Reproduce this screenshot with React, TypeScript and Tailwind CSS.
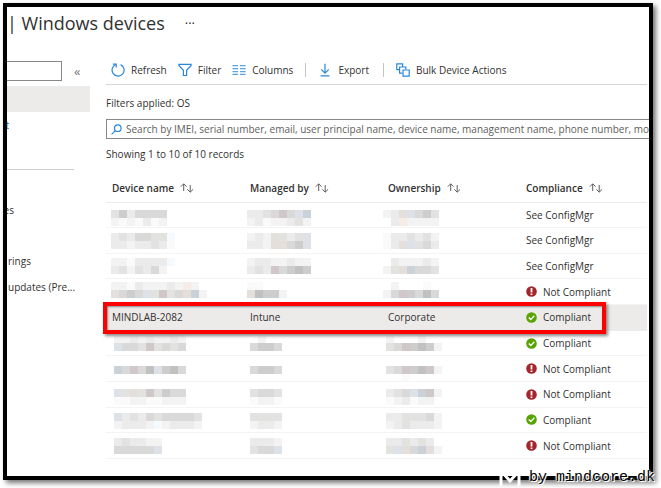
import React from 'react';

type Status = 'configmgr' | 'compliant' | 'not-compliant';

interface Mask {
  x: number;
  y: number;
  cells: string[];
}

interface Device {
  id: number;
  status: Status;
  highlighted?: boolean;
  values?: string[];
  masks?: Mask[];
}

// One letter per 8px block of a redacted value, a dot leaves the block empty
const SHADES: Record<string, string> = {
  a: '#fafafa',
  b: '#f3f3f3',
  c: '#ebebeb',
  d: '#e2e2e1',
  e: '#d8d9d8',
  f: '#cdcdcd',
  g: '#c1c1c1',
  p: '#e5dfdc',
  r: '#cfc7c8',
  o: '#f5ece6',
  u: '#dce2e7',
  v: '#cbd2d7',
  w: '#f5fafe',
};

const COLUMNS = ['Device name', 'Managed by', 'Ownership', 'Compliance'];

const DEVICES: Device[] = [
  {
    id: 1,
    status: 'configmgr',
    masks: [
      { x: 5, y: 7, cells: ['dfceeee', 'babacab'] },
      { x: 3, y: 7, cells: ['ccdereuv', 'bcabbcdb'] },
      { x: 1, y: 7, cells: ['bcpuefd', '.cobbbb'] },
    ],
  },
  {
    id: 2,
    status: 'configmgr',
    masks: [
      { x: 5, y: 5, cells: ['cdceeddw', 'ccbccdca'] },
      { x: 3, y: 5, cells: ['bcbpdcdu', 'ccbppefu'] },
      { x: 1, y: 5, cells: ['accdcdb', 'acpudec'] },
    ],
  },
  {
    id: 3,
    status: 'configmgr',
    masks: [
      { x: 5, y: 4, cells: ['bbaccccw', 'cdbdceb'] },
      { x: 3, y: 4, cells: ['bccbbcbb', 'cdcrefgf'] },
      { x: 1, y: 4, cells: ['.cbbbcb', 'bdpveed'] },
    ],
  },
  {
    id: 4,
    status: 'not-compliant',
    masks: [
      { x: 5, y: 2, cells: ['bbacbbbcbob', 'pefeudrdepvb'] },
      { x: 3, y: 2, cells: ['aa', 'pgffb'] },
      { x: 1, y: 2, cells: ['.b...a', 'berfege'] },
    ],
  },
  { id: 5, status: 'compliant', highlighted: true, values: ['MINDLAB-2082', 'Intune', 'Corporate'] },
  {
    id: 6,
    status: 'compliant',
    masks: [
      { x: 8, y: 4, cells: ['bbcbcbbcb', 'ueedrdede'] },
      { x: 6, y: 4, cells: ['.b', 'effe'] },
      { x: 4, y: 4, cells: ['b...b', 'derfgfb'] },
    ],
  },
  {
    id: 7,
    status: 'not-compliant',
    masks: [
      { x: 8, y: 9, cells: ['veregufge'] },
      { x: 6, y: 9, cells: ['effe'] },
      { x: 4, y: 9, cells: ['derfgrb', '..a'] },
    ],
  },
  {
    id: 8,
    status: 'not-compliant',
    masks: [
      { x: 8, y: 7, cells: ['udpdrdfee', 'aabbaabbb'] },
      { x: 6, y: 7, cells: ['deed', 'abba'] },
      { x: 4, y: 7, cells: ['cdeuvrb', 'abcabb'] },
    ],
  },
  {
    id: 9,
    status: 'compliant',
    masks: [
      { x: 8, y: 5, cells: ['ucdcedeeeed', 'bcccbwbcccb'] },
      { x: 6, y: 5, cells: ['dddd', 'bccb'] },
      { x: 4, y: 5, cells: ['ccdddeb', 'bcdcccb'] },
    ],
  },
  {
    id: 10,
    status: 'not-compliant',
    masks: [
      { x: 8, y: 4, cells: ['cdccbb', 'eeeeeu'] },
      { x: 6, y: 4, cells: ['cccb', 'deeu'] },
      { x: 4, y: 4, cells: ['ccdcdc', 'dupevpb'] },
    ],
  },
];

function MaskedValue({ mask }: { mask: Mask }) {
  return (
    <svg width="128" height="24" className="block" shapeRendering="crispEdges" aria-hidden="true">
      {mask.cells.map((line, row) =>
        line.split('').map((shade, col) =>
          shade === '.' ? null : (
            <rect
              key={`${row}-${col}`}
              x={mask.x + col * 8}
              y={mask.y + row * 8}
              width="8"
              height="8"
              fill={SHADES[shade]}
            />
          )
        )
      )}
    </svg>
  );
}

function RefreshIcon() {
  return (
    <svg width="14" height="14" viewBox="0 0 14 14" fill="none" stroke="#2b88d8" strokeWidth="1.2">
      <path d="M9.6 1.6A6 6 0 1 1 4.8 1.5" />
      <path d="M1.8 1.1h3.4v3.4" />
    </svg>
  );
}

function FilterIcon() {
  return (
    <svg width="14" height="14" viewBox="0 0 14 14" fill="none" stroke="#2b88d8" strokeWidth="1.2">
      <path d="M.9 1.3h12.2v1.2L8.6 7.3v5.2H5.4V7.3L.9 2.5z" />
    </svg>
  );
}

function ColumnsIcon() {
  return (
    <svg width="14" height="14" viewBox="0 0 14 14" fill="none" stroke="#5ba3e0" strokeWidth="1.2">
      <path d="M.5 2.6h5.6M.5 5.6h5.6M.5 8.6h5.6M.5 11.4h5.6M8 2.6h5.6M8 5.6h5.6M8 8.6h5.6M8 11.4h5.6" />
    </svg>
  );
}

function ExportIcon() {
  return (
    <svg width="10" height="14" viewBox="0 0 10 14" fill="none" stroke="#2b88d8" strokeWidth="1.2">
      <path d="M5 .8v9M1.2 6.4L5 10.1l3.8-3.7M.6 12.8h8.8" />
    </svg>
  );
}

function BulkIcon() {
  return (
    <svg width="14" height="14" viewBox="0 0 14 14" fill="none" stroke="#2b88d8" strokeWidth="1.2">
      <path d="M3.6 6.6H.8V.8h5.8v2.6M6.4 10.2H3.6V4h6.2v2.6" />
      <path d="M7 7h6.2v6.2H7z" />
    </svg>
  );
}

function SortIcon() {
  return (
    <svg width="14" height="10" viewBox="0 0 14 10" fill="none" stroke="#605e5c" strokeWidth="1">
      <path d="M3.7 8V1M.8 3.7L3.7.8l2.9 2.9M10.2 2v7M7.3 6.3l2.9 2.9 2.9-2.9" />
    </svg>
  );
}

function StatusIcon({ status }: { status: Status }) {
  if (status === 'compliant') {
    return (
      <svg width="11" height="11" viewBox="0 0 11 11" fill="none">
        <circle cx="5.5" cy="5.5" r="5.3" fill="#57a300" />
        <path d="M2.8 5.6l2 2 3.5-3.8" stroke="#fff" strokeWidth="1.4" />
      </svg>
    );
  }
  return (
    <svg width="11" height="11" viewBox="0 0 11 11">
      <circle cx="5.5" cy="5.5" r="5.3" fill="#a4262c" />
      <path d="M4.6 2h1.8v4.5H4.6zM4.6 7.5h1.8V9H4.6z" fill="#fff" />
    </svg>
  );
}

function Compliance({ status }: { status: Status }) {
  if (status === 'configmgr') return <>See ConfigMgr</>;
  return (
    <span className="flex items-center gap-1.5">
      <StatusIcon status={status} />
      {status === 'compliant' ? 'Compliant' : 'Not Compliant'}
    </span>
  );
}

function Divider() {
  return <span className="h-3.5 w-px bg-[#c8c6c4]" />;
}

function Sidebar() {
  return (
    <aside className="w-[99px] shrink-0">
      <div className="flex h-5 items-center gap-3">
        <input aria-label="Search menu" className="h-5 w-[55px] shrink-0 border border-l-0 border-[#8a8886] bg-white outline-none" />
        <button aria-label="Collapse menu" className="text-[13px] leading-5 text-[#797775]">«</button>
      </div>
      <nav className="mt-[5px] flex flex-col whitespace-nowrap">
        <div className="h-[26px] w-[83px] bg-[#edebe9]" />
        <a href="#" className="flex h-[26px] w-0.5 items-center justify-end text-[#0063b1]">t</a>
        <div className="mt-[31px] mb-[27px] h-px w-[67px] bg-[#d2d0ce]" />
        <a href="#" className="flex h-[26px] w-[7px] items-center justify-end">es</a>
        <a href="#" className="mt-[25px] ml-px flex h-[26px] items-center">rings</a>
        <a href="#" className="ml-px flex h-[26px] items-center">updates (Pre...</a>
      </nav>
    </aside>
  );
}

function Toolbar() {
  return (
    <div className="mr-0.5 flex h-[30px] items-center border-b border-[#d8d6d4] pl-[5px] whitespace-nowrap">
      <button className="mr-[11px] flex items-center gap-1.5">
        <RefreshIcon />
        Refresh
      </button>
      <button className="mr-[11px] flex items-center gap-1.5">
        <FilterIcon />
        Filter
      </button>
      <button className="mr-3 flex items-center gap-1.5">
        <ColumnsIcon />
        Columns
      </button>
      <Divider />
      <button className="mx-3.5 flex items-center gap-2">
        <ExportIcon />
        Export
      </button>
      <Divider />
      <button className="ml-3 flex items-center gap-1.5">
        <BulkIcon />
        Bulk Device Actions
      </button>
    </div>
  );
}

function DeviceTable() {
  return (
    <table className="mt-3 mr-0.5 h-[285px] w-[calc(100%-2px)] table-fixed border-collapse text-left">
      <thead>
        <tr className="h-7 border-b border-[#edebe9]">
          {COLUMNS.map((name) => (
            <th key={name} className="w-[138px] p-0 pl-1.5 font-semibold whitespace-nowrap last:w-auto">
              <button className="flex items-center gap-1.5">
                {name}
                <SortIcon />
              </button>
            </th>
          ))}
        </tr>
      </thead>
      <tbody>
        {DEVICES.map((device) => (
          <tr
            key={device.id}
            className={`h-[25px] border-b ${device.highlighted ? 'relative border-[#edebe9] bg-[#edebe9]' : 'border-[#f5f4f3]'}`}
          >
            {device.values?.map((value) => (
              <td key={value} className="p-0 pl-1.5">{value}</td>
            ))}
            {device.masks?.map((mask, i) => (
              <td key={i} className="p-0">
                <MaskedValue mask={mask} />
              </td>
            ))}
            <td className="p-0 pl-1.5">
              <Compliance status={device.status} />
              {device.highlighted && (
                <span className="pointer-events-none absolute -top-[3px] right-[41px] -bottom-[5px] -left-[3px] border-4 border-[#ff0000] shadow-[2px_2px_3px_#888,inset_1px_1px_2px_#888]" />
              )}
            </td>
          </tr>
        ))}
      </tbody>
    </table>
  );
}

export default function App() {
  return (
    <div className="relative flex h-screen overflow-hidden bg-white pt-[3px] pr-2 pb-2 pl-[3px] font-['Open_Sans','Noto_Sans',sans-serif] text-[10px] leading-4 text-[#323130]">
      <div className="min-w-0 flex-1 overflow-hidden border-4 border-black bg-white shadow-[3px_3px_5px_#777]">
        <header className="flex h-[54px] items-start gap-5 pt-1">
          <h1 className="text-[18px] leading-6 text-[#323130]">| Windows devices</h1>
          <button aria-label="More" className="text-[13px] leading-6">···</button>
        </header>
        <div className="flex">
          <Sidebar />
          <main className="min-w-0 flex-1 -mt-1.5">
            <Toolbar />
            <p className="mt-2.5">Filters applied: OS</p>
            <label className="mt-2 flex h-5 items-center gap-1 border border-r-0 border-[#8a8886] pl-1">
              <svg width="11" height="11" viewBox="0 0 11 11" fill="none" stroke="#2b88d8" strokeWidth="1.2">
                <circle cx="6.8" cy="4.2" r="3.3" />
                <path d="M4.3 6.6L.6 10.3" />
              </svg>
              <input
                aria-label="Search devices"
                className="min-w-0 flex-1 outline-none placeholder:text-[#605e5c]"
                placeholder="Search by IMEI, serial number, email, user principal name, device name, management name, phone number, model, or manufacturer"
              />
            </label>
            <p className="mt-[7px]">Showing 1 to 10 of 10 records</p>
            <DeviceTable />
          </main>
        </div>
      </div>
      <div className="absolute right-1.5 bottom-0 flex items-center gap-0.5">
        <svg width="28" height="16" viewBox="0 0 28 16" fill="none" stroke="#fff" strokeWidth="3">
          <path d="M2 16V1l9 10 9-10v15" />
        </svg>
        <span className="font-['Liberation_Mono',monospace] text-[15px] leading-5 text-black [text-shadow:0_0_2px_#fff,1px_1px_0_#fff,-1px_-1px_0_#fff,0_0_3px_#fff]">by mindcore.dk</span>
      </div>
    </div>
  );
}
